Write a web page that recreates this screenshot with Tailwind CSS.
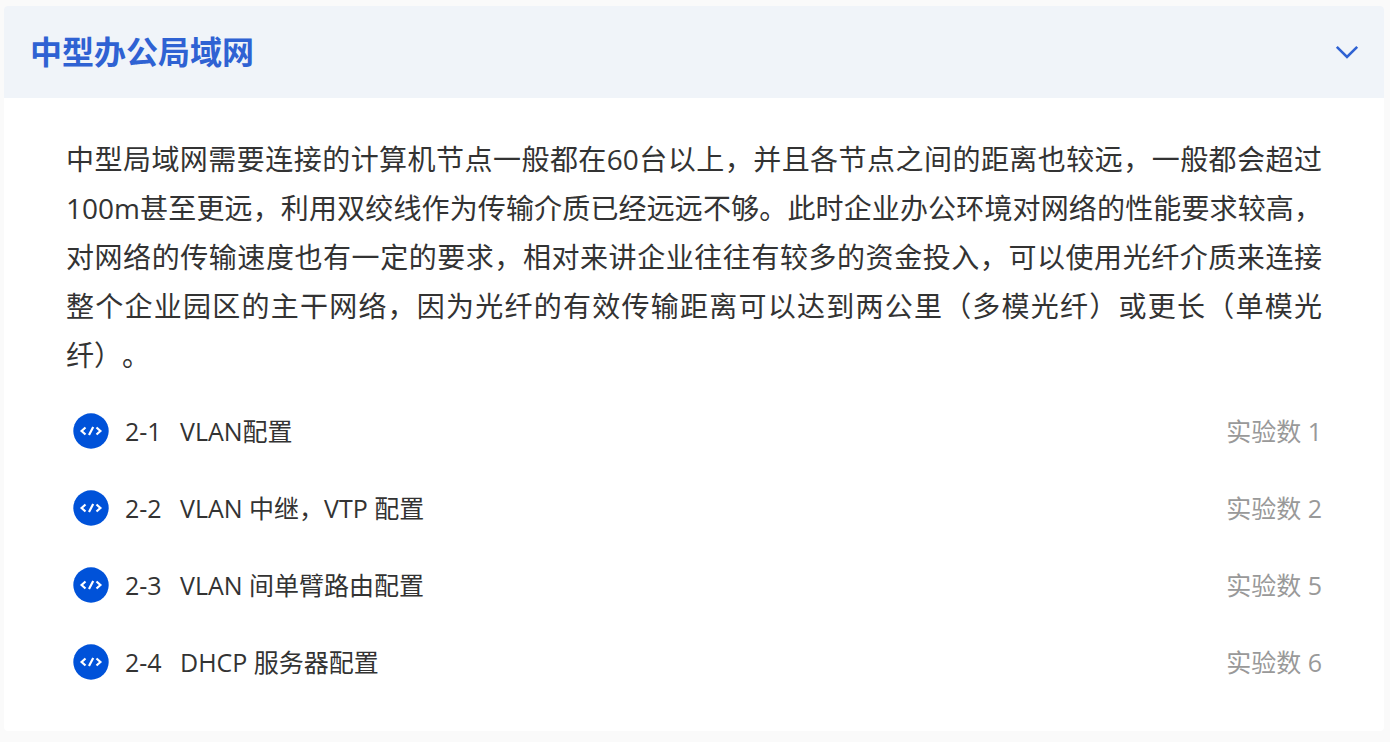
<!DOCTYPE html>
<html lang="zh-CN">
<head>
  <meta charset="UTF-8" />
  <meta name="viewport" content="width=device-width, initial-scale=1.0" />
  <title>中型办公局域网</title>
  <script src="https://cdn.jsdelivr.net/npm/@tailwindcss/browser@4"></script>
</head>
<body class="min-h-screen bg-[#fafafa] text-[#333333] pt-1.5 pl-1 pr-1.5 font-['Open_Sans','Noto_Sans_CJK_SC',sans-serif]">
  <svg class="hidden">
    <!-- Code badge -->
    <symbol id="codeIcon" viewBox="0 0 36 36">
      <circle cx="18" cy="18" r="17.7" fill="#0052d9" />
      <path d="M12.5 14.5 8.6 18l3.9 3.5M23.5 14.5l3.9 3.5-3.9 3.5M20.2 14l-4.2 8" fill="none" stroke="#fff" stroke-width="2.2" />
    </symbol>
  </svg>

  <section class="bg-white rounded">
    <!-- Header -->
    <h2>
      <button id="toggleBtn" type="button" aria-expanded="true" aria-controls="chapterBody" class="w-full h-[92px] pl-[26px] pr-[25px] flex items-center justify-between bg-[#f0f4f9] rounded-t text-[#2f62d3] cursor-pointer">
        <span class="text-[32px] leading-[48px] font-bold">中型办公局域网</span>
        <svg class="w-6 h-6" viewBox="0 0 24 24" fill="none" stroke="currentColor" stroke-width="2.6">
          <path d="M1.8 6.8 12 17 22.2 6.8" />
        </svg>
      </button>
    </h2>

    <div id="chapterBody" class="px-[62px] pt-[37px] pb-[31px]">
      <p class="text-[28px] leading-[49px] text-justify [text-spacing-trim:space-all]">中型局域网需要连接的计算机节点一般都在60台以上，并且各节点之间的距离也较远，一般都会超过100m甚至更远，利用双绞线作为传输介质已经远远不够。此时企业办公环境对网络的性能要求较高，对网络的传输速度也有一定的要求，相对来讲企业往往有较多的资金投入，可以使用光纤介质来连接整个企业园区的主干网络，因为光纤的有效传输距离可以达到两公里（多模光纤）或更长（单模光纤）。</p>

      <!-- Lessons -->
      <ul class="mt-3 text-[25px] leading-9">
        <li class="h-[77px] flex items-center pl-[7px]">
          <svg class="w-9 h-9 mr-4"><use href="#codeIcon" /></svg>
          <span class="w-[55px]">2-1</span>
          <span class="flex-1">VLAN配置</span>
          <span class="text-[#999999]">实验数 1</span>
        </li>
        <li class="h-[77px] flex items-center pl-[7px]">
          <svg class="w-9 h-9 mr-4"><use href="#codeIcon" /></svg>
          <span class="w-[55px]">2-2</span>
          <span class="flex-1">VLAN 中继，VTP 配置</span>
          <span class="text-[#999999]">实验数 2</span>
        </li>
        <li class="h-[77px] flex items-center pl-[7px]">
          <svg class="w-9 h-9 mr-4"><use href="#codeIcon" /></svg>
          <span class="w-[55px]">2-3</span>
          <span class="flex-1">VLAN 间单臂路由配置</span>
          <span class="text-[#999999]">实验数 5</span>
        </li>
        <li class="h-[77px] flex items-center pl-[7px]">
          <svg class="w-9 h-9 mr-4"><use href="#codeIcon" /></svg>
          <span class="w-[55px]">2-4</span>
          <span class="flex-1">DHCP 服务器配置</span>
          <span class="text-[#999999]">实验数 6</span>
        </li>
      </ul>
    </div>
  </section>

  <script>
    const toggleBtn = document.getElementById("toggleBtn");
    const chapterBody = document.getElementById("chapterBody");

    toggleBtn.onclick = () => {
      const closed = chapterBody.classList.toggle("hidden");
      toggleBtn.setAttribute("aria-expanded", String(!closed));
    };
  </script>
</body>
</html>
